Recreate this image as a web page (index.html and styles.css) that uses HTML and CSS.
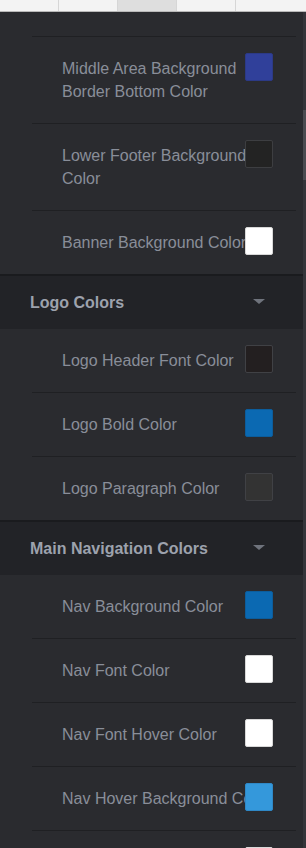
FILE: index.html
```html
<!DOCTYPE html>
<html>
<head>
<meta charset="utf-8">
<link rel="stylesheet" href="styles.css">
</head>
<body>
<div class="topbar">
  <div class="tab"></div>
  <div class="tab"></div>
  <div class="tab active"></div>
  <div class="tab"></div>
  <div class="tab last"></div>
</div>
<div class="screen">
  <div class="panel">
    <div class="group">
      <div class="row cut"></div>
      <div class="row"><span class="label">Middle Area Background Border Bottom Color</span><span class="swatch sw-indigo"></span></div>
      <div class="row"><span class="label">Lower Footer Background Color</span><span class="swatch sw-dark"></span></div>
      <div class="row last"><span class="label">Banner Background Color</span><span class="swatch sw-white"></span></div>
    </div>
    <div class="section"><span class="section-title">Logo Colors</span><span class="caret"></span></div>
    <div class="group">
      <div class="row"><span class="label">Logo Header Font Color</span><span class="swatch sw-black"></span></div>
      <div class="row"><span class="label">Logo Bold Color</span><span class="swatch sw-blue"></span></div>
      <div class="row last"><span class="label">Logo Paragraph Color</span><span class="swatch sw-gray"></span></div>
    </div>
    <div class="section"><span class="section-title">Main Navigation Colors</span><span class="caret"></span></div>
    <div class="group">
      <div class="row"><span class="label">Nav Background Color</span><span class="swatch sw-blue"></span></div>
      <div class="row"><span class="label">Nav Font Color</span><span class="swatch sw-white"></span></div>
      <div class="row"><span class="label">Nav Font Hover Color</span><span class="swatch sw-white"></span></div>
      <div class="row"><span class="label">Nav Hover Background Color</span><span class="swatch sw-light"></span></div>
      <div class="row"><span class="label empty"></span><span class="swatch sw-white"></span></div>
    </div>
  </div>
  <div class="scrollbar"><div class="thumb"></div></div>
</div>
</body>
</html>
```
FILE: styles.css
```css
html, body {
  margin: 0;
  padding: 0;
  background: #2a2b2f;
  overflow: hidden;
}
body {
  width: 306px;
  height: 848px;
  font-family: "Liberation Sans", Arial, sans-serif;
}
.topbar {
  display: flex;
  height: 11px;
  background: #f3f3f3;
  border-bottom: 1px solid #b9b9b9;
}
.tab {
  width: 59px;
  border-right: 1px solid #d6d6d6;
  box-sizing: border-box;
}
.tab.active {
  background: #dedede;
}
.tab.last {
  flex: 1;
  border-right: none;
}
.screen {
  display: flex;
  height: 836px;
}
.panel {
  flex: 1;
  background: #2a2b2f;
  overflow: hidden;
}
.scrollbar {
  width: 3px;
  background: #34353a;
  padding-top: 98px;
}
.thumb {
  height: 70px;
  background: #4a4b50;
}
.group {
  padding: 0 7px 0 32px;
}
.row {
  position: relative;
  padding: 20px 0 20px 30px;
  line-height: 23px;
  font-size: 16px;
  color: #898e99;
  border-bottom: 1px solid #1f2023;
}
.row.cut {
  height: 25px;
  padding: 0;
  box-sizing: border-box;
}
.row.last {
  border-bottom: none;
}
.label {
  display: block;
  max-width: 222px;
}
.label.empty {
  height: 23px;
}
.swatch {
  position: absolute;
  top: 16px;
  right: 23px;
  width: 28px;
  height: 28px;
  box-sizing: border-box;
  border-radius: 2px;
  border: 1px solid #3b3c40;
}
.sw-indigo { background: #30409a; border-color: #2c3a86; }
.sw-dark { background: #232323; border-color: #3d3e41; }
.sw-white { background: #ffffff; border-color: #d8d8d8; }
.sw-black { background: #231f20; border-color: #404145; }
.sw-blue { background: #0b69b2; border-color: #0c5d9c; }
.sw-gray { background: #333333; border-color: #404145; }
.sw-light { background: #3498db; border-color: #2f88c6; }
.section {
  display: flex;
  align-items: center;
  justify-content: space-between;
  height: 53px;
  border-top: 2px solid #1a1b1e;
  background: #222327;
  padding: 0 38px 0 30px;
}
.section-title {
  font-size: 16px;
  font-weight: bold;
  color: #9da2ad;
}
.caret {
  width: 0;
  height: 0;
  margin-top: -2px;
  border-left: 6px solid transparent;
  border-right: 6px solid transparent;
  border-top: 5px solid #6f737c;
}
```
